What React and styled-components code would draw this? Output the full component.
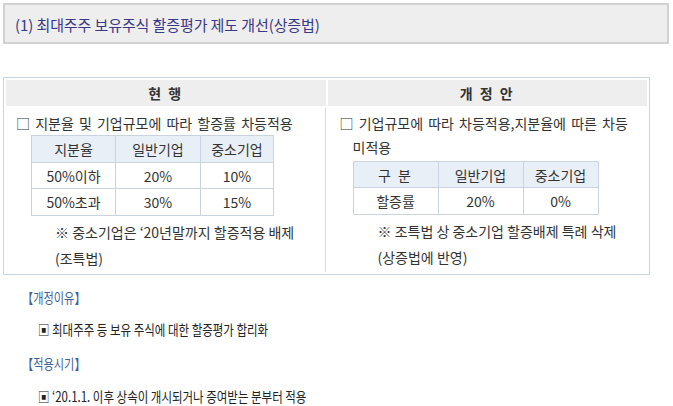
import styled, { createGlobalStyle } from "styled-components";

const GlobalStyle = createGlobalStyle`
  body {
    margin: 0;
    background: #ffffff;
    font-family: "Noto Sans CJK KR", "Noto Sans", sans-serif;
    color: #333333;
  }
`;

const Page = styled.div`
  width: 673px;
  height: 406px;
  overflow: hidden;
  padding-top: 3px;
  box-sizing: border-box;
`;

const TitleBox = styled.div`
  margin: 0 4px 0 3px;
  height: 41px;
  box-sizing: border-box;
  border: 2px solid #d2d2d2;
  background: #eeeeee;
  padding-left: 10px;
  display: flex;
  align-items: center;
`;

const TitleText = styled.span`
  font-size: 15px;
  color: #383887;
  letter-spacing: -0.1px;
  padding-top: 2px;
`;

const CompareTable = styled.table`
  margin: 33px 0 0 3px;
  width: 647px;
  border: 1px solid #c9d5e1;
  border-spacing: 2px;
  table-layout: fixed;
`;

const HeadCell = styled.th`
  height: 26px;
  padding: 0;
  background: #eeeeee;
  font-size: 14px;
  font-weight: bold;
  color: #333333;
  letter-spacing: 2px;
  text-align: center;
`;

const BodyCell = styled.td`
  vertical-align: top;
  padding: 3px 0 1px ${(p) => p.$pad}px;
  border-right: ${(p) => (p.$divider ? "1px solid #d3dbe4" : "none")};
  font-size: 14px;
  line-height: 24px;
`;

const Lead = styled.div`
  padding-left: ${(p) => p.$hang}px;
  text-indent: -${(p) => p.$hang}px;
  white-space: nowrap;
  word-spacing: 2px;
`;

const RateTable = styled.table`
  margin-left: ${(p) => p.$left}px;
  margin-top: ${(p) => p.$top}px;
  border-collapse: collapse;
  font-size: 14px;
`;

const RateHead = styled.th`
  background: #e9eff6;
  border: 1px solid #c9d4e0;
  font-weight: normal;
  height: ${(p) => p.$h}px;
  width: ${(p) => p.$w}px;
  padding: 0;
  box-sizing: border-box;
  text-align: center;
  color: #333333;
  letter-spacing: ${(p) => (p.$spaced ? "2px" : "0")};
`;

const RateCell = styled.td`
  border: 1px solid #c9d4e0;
  height: ${(p) => p.$h}px;
  padding: 0;
  text-align: center;
  box-sizing: border-box;
`;

const Note = styled.div`
  margin-left: ${(p) => p.$left}px;
  margin-top: 3px;
  line-height: 26px;
`;

const Section = styled.div`
  padding-left: 22px;
`;

const Heading = styled.div`
  margin-top: ${(p) => p.$top}px;
  line-height: 20px;
  font-size: 14px;
  color: #3f5f99;
  transform: scaleX(0.8);
  transform-origin: left center;
`;

const Item = styled.div`
  margin-top: ${(p) => p.$top}px;
  padding-left: 16px;
  line-height: 20px;
  font-size: 14px;
  color: #222222;
  white-space: nowrap;
  transform: scaleX(0.82);
  transform-origin: 16px center;
`;

export default function App() {
  return (
    <Page>
      <GlobalStyle />
      <TitleBox>
        <TitleText>(1) 최대주주 보유주식 할증평가 제도 개선(상증법)</TitleText>
      </TitleBox>

      <CompareTable>
        <thead>
          <tr>
            <HeadCell>현 행</HeadCell>
            <HeadCell>개 정 안</HeadCell>
          </tr>
        </thead>
        <tbody>
          <tr>
            <BodyCell $pad={10} $divider>
              <Lead $hang={0}>□ 지분율 및 기업규모에 따라 할증률 차등적용</Lead>
              <RateTable $left={15} $top={0}>
                <thead>
                  <tr>
                    <RateHead $w={84} $h={27}>지분율</RateHead>
                    <RateHead $w={85} $h={27}>일반기업</RateHead>
                    <RateHead $w={73} $h={27}>중소기업</RateHead>
                  </tr>
                </thead>
                <tbody>
                  <tr>
                    <RateCell $h={26}>50%이하</RateCell>
                    <RateCell $h={26}>20%</RateCell>
                    <RateCell $h={26}>10%</RateCell>
                  </tr>
                  <tr>
                    <RateCell $h={27}>50%초과</RateCell>
                    <RateCell $h={27}>30%</RateCell>
                    <RateCell $h={27}>15%</RateCell>
                  </tr>
                </tbody>
              </RateTable>
              <Note $left={39}>
                ※ 중소기업은 ‘20년말까지 할증적용 배제
                <br />
                (조특법)
              </Note>
            </BodyCell>
            <BodyCell $pad={12}>
              <Lead $hang={13}>
                □ 기업규모에 따라 차등적용,지분율에 따른 차등
                <br />
                미적용
              </Lead>
              <RateTable $left={13} $top={2}>
                <thead>
                  <tr>
                    <RateHead $w={85} $h={26} $spaced>
                      구 분
                    </RateHead>
                    <RateHead $w={85} $h={26}>일반기업</RateHead>
                    <RateHead $w={75} $h={26}>중소기업</RateHead>
                  </tr>
                </thead>
                <tbody>
                  <tr>
                    <RateCell $h={27}>할증률</RateCell>
                    <RateCell $h={27}>20%</RateCell>
                    <RateCell $h={27}>0%</RateCell>
                  </tr>
                </tbody>
              </RateTable>
              <Note $left={38}>
                ※ 조특법 상 중소기업 할증배제 특례 삭제
                <br />
                (상증법에 반영)
              </Note>
            </BodyCell>
          </tr>
        </tbody>
      </CompareTable>

      <Section>
        <Heading $top={12}>【개정이유】</Heading>
        <Item $top={12}>▣ 최대주주 등 보유 주식에 대한 할증평가 합리화</Item>
        <Heading $top={14}>【적용시기】</Heading>
        <Item $top={13}>▣ ‘20.1.1. 이후 상속이 개시되거나 증여받는 분부터 적용</Item>
      </Section>
    </Page>
  );
}
